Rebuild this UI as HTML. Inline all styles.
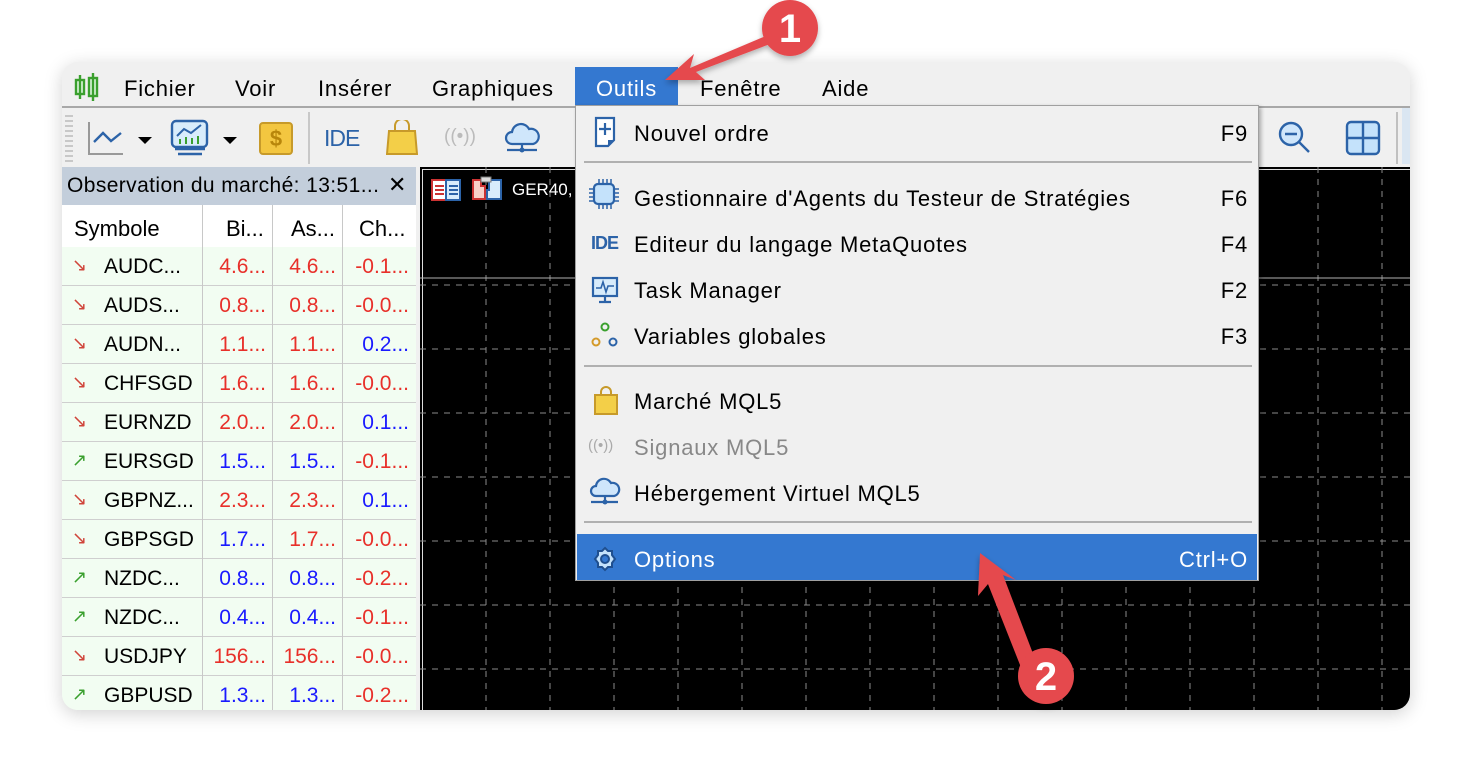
<!DOCTYPE html>
<html><head><meta charset="utf-8"><style>
*{margin:0;padding:0;box-sizing:border-box}
body{width:1472px;height:772px;background:#fff;position:relative;overflow:hidden;font-family:"Liberation Sans","DejaVu Sans",sans-serif;color:#000}
.a{position:absolute}
#win{position:absolute;left:62px;top:62px;width:1348px;height:648px;border-radius:16px;overflow:hidden;background:#f0f0f0;box-shadow:0 4px 18px rgba(0,0,0,.18)}
.mi{position:absolute;top:14px;font-size:22px;letter-spacing:.8px}
.row{position:absolute;left:0;width:354px;height:39px;background:#f2fdf2;border-bottom:1px solid #cfcfcf;font-size:21px}
.row div{position:absolute;top:8px}
.c1{left:42px}.c2{left:142px;width:62px;text-align:right}.c3{left:212px;width:62px;text-align:right}.c4{left:282px;width:65px;text-align:right}
.r{color:#e8302a}.b{color:#1a1aff}
.ar{left:10px;font-size:18px}
.vl{position:absolute;top:0;width:1px;height:100%;background:#c8c8c8}
.it{position:absolute;left:58px;font-size:22px;letter-spacing:.8px}
.sc{position:absolute;right:10px;font-size:22px;letter-spacing:.8px}
.sep{position:absolute;left:8px;right:6px;height:2px;background:#b0b0b0}
</style></head><body>
<div id="win">
 <svg class="a" style="left:12px;top:10px" width="26" height="30"><rect x="2" y="8" width="8" height="14" fill="#e0f8e0" stroke="#3aa02e" stroke-width="2.4"/><line x1="6" y1="3" x2="6" y2="27" stroke="#3aa02e" stroke-width="2.4"/><rect x="15" y="6" width="8" height="18" fill="#e0f8e0" stroke="#3aa02e" stroke-width="2.4"/><line x1="19" y1="1" x2="19" y2="29" stroke="#3aa02e" stroke-width="2.4"/></svg>
 <div class="mi" style="left:62px">Fichier</div>
 <div class="mi" style="left:173px">Voir</div>
 <div class="mi" style="left:256px">Insérer</div>
 <div class="mi" style="left:370px">Graphiques</div>
 <div class="a" style="left:513px;top:5px;width:103px;height:38px;background:#3478d0"></div>
 <div class="mi" style="left:534px;color:#fff">Outils</div>
 <div class="mi" style="left:638px">Fenêtre</div>
 <div class="mi" style="left:760px">Aide</div>
 <div class="a" style="left:0;top:44px;width:1348px;height:2px;background:#a8a8a8"></div>
 <div class="a" style="left:3px;top:50px;width:8px;height:52px;background:repeating-linear-gradient(#f0f0f0 0 3px,#c8c8c8 3px 5px)"></div>
 <svg class="a" style="left:25px;top:58px" width="40" height="36"><polyline points="2,2 2,34 36,34" fill="none" stroke="#999" stroke-width="2"/><polyline points="7,22 16,13 24,21 34,13" fill="none" stroke="#2c63a8" stroke-width="2.4"/></svg>
 <div class="a" style="left:76px;top:75px;width:0;height:0;border-left:7px solid transparent;border-right:7px solid transparent;border-top:7px solid #000"></div>
 <svg class="a" style="left:108px;top:57px" width="40" height="38"><rect x="2" y="2" width="35" height="26" rx="4" fill="#d8ecfb" stroke="#2c63a8" stroke-width="2.4"/><polyline points="7,17 14,10 21,14 31,6" fill="none" stroke="#2c63a8" stroke-width="2"/><g fill="#3aa02e"><rect x="9" y="20" width="2" height="5"/><rect x="15" y="18" width="2" height="7"/><rect x="21" y="19" width="2" height="6"/><rect x="27" y="17" width="2" height="8"/></g><path d="M5 30h30M8 35h24" stroke="#2c63a8" stroke-width="2.4"/></svg>
 <div class="a" style="left:161px;top:75px;width:0;height:0;border-left:7px solid transparent;border-right:7px solid transparent;border-top:7px solid #000"></div>
 <div class="a" style="left:197px;top:60px;width:34px;height:33px;background:#f3c640;border:2px solid #c79a2a;border-radius:4px;color:#b8860b;font-size:22px;font-weight:bold;text-align:center;line-height:29px">$</div>
 <div class="a" style="left:246px;top:50px;width:2px;height:52px;background:#c8c8c8"></div>
 <div class="a" style="left:262px;top:63px;font-size:23px;color:#2c63a8;letter-spacing:-1px">IDE</div>
 <svg class="a" style="left:324px;top:58px" width="32" height="36"><path d="M9 11V6a7 7 0 0 1 14 0v5" fill="none" stroke="#c79a2a" stroke-width="2"/><path d="M3 11h26l2 23H1z" fill="#f3cf48" stroke="#c79a2a" stroke-width="2"/></svg>
 <div class="a" style="left:382px;top:64px;font-size:19px;color:#bbb">((•))</div>
 <svg class="a" style="left:442px;top:58px" width="36" height="36"><path d="M8 24a6 6 0 0 1 0-12 9 9 0 0 1 17-3 7 7 0 0 1 4 15z" fill="#cfe6fb" stroke="#2c63a8" stroke-width="2.2"/><path d="M18 24v6M3 30h30" stroke="#2c63a8" stroke-width="2.2"/><circle cx="18" cy="30" r="2.5" fill="#2c63a8"/></svg>
 <svg class="a" style="left:1215px;top:58px" width="40" height="38"><circle cx="14" cy="14" r="11" fill="#cfe6fb" stroke="#2c63a8" stroke-width="2.4"/><path d="M8 14h12M22 22l10 10" stroke="#2c63a8" stroke-width="2.4"/></svg>
 <svg class="a" style="left:1283px;top:58px" width="36" height="36"><rect x="2" y="2" width="32" height="32" rx="4" fill="#c4e2fb" stroke="#2c63a8" stroke-width="2.4"/><path d="M18 2v32M2 18h32" stroke="#2c63a8" stroke-width="2.4"/></svg>
 <div class="a" style="left:1334px;top:50px;width:2px;height:52px;background:#c0c0c0"></div>
 <div class="a" style="left:1340px;top:46px;width:10px;height:56px;background:#dae6f2"></div>
 <div class="a" style="left:0;top:105px;width:354px;height:38px;background:#c3cedb;font-size:21px;letter-spacing:.4px;padding:7px 0 0 5px;white-space:nowrap">Observation du marché: 13:51...</div>
 <div class="a" style="left:326px;top:110px;width:28px;height:30px;background:#c3cedb;font-size:22px;font-weight:bold">✕</div>
 <div class="a" style="left:0;top:143px;width:354px;height:42px;background:#fff;font-size:22px">
  <div class="a" style="left:12px;top:11px">Symbole</div>
  <div class="a" style="left:164px;top:11px">Bi...</div>
  <div class="a" style="left:229px;top:11px">As...</div>
  <div class="a" style="left:297px;top:11px">Ch...</div>
 </div>
 <div class="a" style="left:0;top:185px;width:354px;height:463px;background:#f2fdf2">
  <div class="row" style="top:0"><div class="ar" style="color:#d0453b">↘</div><div class="c1">AUDC...</div><div class="c2 r">4.6...</div><div class="c3 r">4.6...</div><div class="c4 r">-0.1...</div></div>
  <div class="row" style="top:39px"><div class="ar" style="color:#d0453b">↘</div><div class="c1">AUDS...</div><div class="c2 r">0.8...</div><div class="c3 r">0.8...</div><div class="c4 r">-0.0...</div></div>
  <div class="row" style="top:78px"><div class="ar" style="color:#d0453b">↘</div><div class="c1">AUDN...</div><div class="c2 r">1.1...</div><div class="c3 r">1.1...</div><div class="c4 b">0.2...</div></div>
  <div class="row" style="top:117px"><div class="ar" style="color:#d0453b">↘</div><div class="c1">CHFSGD</div><div class="c2 r">1.6...</div><div class="c3 r">1.6...</div><div class="c4 r">-0.0...</div></div>
  <div class="row" style="top:156px"><div class="ar" style="color:#d0453b">↘</div><div class="c1">EURNZD</div><div class="c2 r">2.0...</div><div class="c3 r">2.0...</div><div class="c4 b">0.1...</div></div>
  <div class="row" style="top:195px"><div class="ar" style="color:#3aa02e">↗</div><div class="c1">EURSGD</div><div class="c2 b">1.5...</div><div class="c3 b">1.5...</div><div class="c4 r">-0.1...</div></div>
  <div class="row" style="top:234px"><div class="ar" style="color:#d0453b">↘</div><div class="c1">GBPNZ...</div><div class="c2 r">2.3...</div><div class="c3 r">2.3...</div><div class="c4 b">0.1...</div></div>
  <div class="row" style="top:273px"><div class="ar" style="color:#d0453b">↘</div><div class="c1">GBPSGD</div><div class="c2 b">1.7...</div><div class="c3 r">1.7...</div><div class="c4 r">-0.0...</div></div>
  <div class="row" style="top:312px"><div class="ar" style="color:#3aa02e">↗</div><div class="c1">NZDC...</div><div class="c2 b">0.8...</div><div class="c3 b">0.8...</div><div class="c4 r">-0.2...</div></div>
  <div class="row" style="top:351px"><div class="ar" style="color:#3aa02e">↗</div><div class="c1">NZDC...</div><div class="c2 b">0.4...</div><div class="c3 b">0.4...</div><div class="c4 r">-0.1...</div></div>
  <div class="row" style="top:390px"><div class="ar" style="color:#d0453b">↘</div><div class="c1">USDJPY</div><div class="c2 r">156...</div><div class="c3 r">156...</div><div class="c4 r">-0.0...</div></div>
  <div class="row" style="top:429px"><div class="ar" style="color:#3aa02e">↗</div><div class="c1">GBPUSD</div><div class="c2 b">1.3...</div><div class="c3 b">1.3...</div><div class="c4 r">-0.2...</div></div>
 </div>
 <div class="vl" style="left:140px;top:143px;height:505px"></div>
 <div class="vl" style="left:210px;top:143px;height:505px"></div>
 <div class="vl" style="left:280px;top:143px;height:505px"></div>
 <div class="a" style="left:357px;top:103px;width:991px;height:545px;background:#000;border-top:2px solid #f0f0f0;border-left:1px solid #f0f0f0">
  <div class="a" style="left:2px;top:2px;right:0;bottom:0;border:1px solid #ddd;border-right:none;border-bottom:none"></div>
  <svg class="a" style="left:0;top:0" width="991" height="545">
   <g stroke="#8a8a8a" stroke-width="1" stroke-dasharray="6,6">
    <path d="M66 0V545M130 0V545M194 0V545M258 0V545M322 0V545M386 0V545M450 0V545M514 0V545M578 0V545M642 0V545M706 0V545M770 0V545M834 0V545M898 0V545M962 0V545"/>
    <path d="M0 118H991M0 182H991M0 246H991M0 310H991M0 374H991M0 438H991M0 502H991"/>
   </g>
   <path d="M0 111H991" stroke="#b0b0b0"/>
  </svg>
  <svg class="a" style="left:11px;top:11px" width="32" height="24"><rect x="1" y="2" width="28" height="20" fill="#fff" stroke="#c33" stroke-width="2"/><rect x="15" y="2" width="14" height="20" fill="#d8ecfb" stroke="#2c63a8" stroke-width="2"/><path d="M4 8h9M4 12h9M4 16h9" stroke="#c33" stroke-width="2"/><path d="M18 8h9M18 12h9M18 16h9" stroke="#2c63a8" stroke-width="2"/></svg>
  <svg class="a" style="left:51px;top:9px" width="32" height="26"><path d="M2 4h8v6h4v13H2z" fill="#f8d0c8" stroke="#c33" stroke-width="2"/><path d="M18 4h12v19H16v-9h2z" fill="#d8ecfb" stroke="#2c63a8" stroke-width="2"/><rect x="10" y="1" width="10" height="5" fill="#ddd" stroke="#777"/></svg>
  <div class="a" style="left:92px;top:13px;color:#fff;font-size:17px">GER40,</div>
 </div>
 <div class="a" style="left:513px;top:43px;width:684px;height:476px;background:#f0f0f0;border:1px solid #a0a0a0;box-shadow:2px 2px 4px rgba(0,0,0,.3)">
  <svg class="a" style="left:18px;top:10px" width="24" height="32"><path d="M2 2h18v22l-6 6H2z" fill="#fff" stroke="#2c63a8" stroke-width="2.2"/><path d="M11 7v12M5 13h12" stroke="#2c63a8" stroke-width="2.2"/><path d="M14 30v-6h6" fill="#2c63a8"/></svg>
  <div class="it" style="top:15px">Nouvel ordre</div><div class="sc" style="top:15px">F9</div>
  <div class="sep" style="top:55px"></div>
  <svg class="a" style="left:13px;top:72px" width="30" height="32"><rect x="5" y="6" width="20" height="20" rx="4" fill="#c4e2fb" stroke="#2c63a8" stroke-width="2.2"/><path d="M10 1v5M14 1v5M18 1v5M22 1v5M10 26v5M14 26v5M18 26v5M22 26v5M0 11h5M0 15h5M0 19h5M0 23h5M25 11h5M25 15h5M25 19h5M25 23h5" stroke="#2c63a8" stroke-width="1.5"/></svg>
  <div class="it" style="top:80px">Gestionnaire d'Agents du Testeur de Stratégies</div><div class="sc" style="top:80px">F6</div>
  <div class="a" style="left:15px;top:127px;font-size:18px;font-weight:bold;color:#2c63a8;letter-spacing:-1px">IDE</div>
  <div class="it" style="top:126px">Editeur du langage MetaQuotes</div><div class="sc" style="top:126px">F4</div>
  <svg class="a" style="left:15px;top:170px" width="28" height="28"><rect x="2" y="2" width="24" height="18" fill="#d8ecfb" stroke="#2c63a8" stroke-width="2.2"/><polyline points="5,12 10,12 12,6 15,16 17,10 23,10" fill="none" stroke="#2c63a8" stroke-width="1.6"/><path d="M14 20v5M8 26h12" stroke="#2c63a8" stroke-width="2.2"/></svg>
  <div class="it" style="top:172px">Task Manager</div><div class="sc" style="top:172px">F2</div>
  <svg class="a" style="left:15px;top:214px" width="28" height="28"><circle cx="14" cy="7" r="3.5" fill="none" stroke="#3aa02e" stroke-width="2"/><circle cx="5" cy="22" r="3.5" fill="none" stroke="#d49a2a" stroke-width="2"/><circle cx="22" cy="22" r="3.5" fill="none" stroke="#2c63a8" stroke-width="2"/></svg>
  <div class="it" style="top:218px">Variables globales</div><div class="sc" style="top:218px">F3</div>
  <div class="sep" style="top:259px"></div>
  <svg class="a" style="left:17px;top:280px" width="26" height="30"><path d="M8 9V6a5 5 0 0 1 10 0v3" fill="none" stroke="#c79a2a" stroke-width="2"/><path d="M2 9h22v19H2z" fill="#f3cf48" stroke="#c79a2a" stroke-width="2"/></svg>
  <div class="it" style="top:283px">Marché MQL5</div>
  <div class="a" style="left:12px;top:331px;font-size:15px;color:#aaa">((•))</div>
  <div class="it" style="top:329px;color:#888">Signaux MQL5</div>
  <svg class="a" style="left:13px;top:370px" width="32" height="32"><path d="M7 20a5 5 0 0 1 0-10 8 8 0 0 1 15-3 6 6 0 0 1 3 13z" fill="#cfe6fb" stroke="#2c63a8" stroke-width="2.2"/><path d="M16 20v6M2 26h27" stroke="#2c63a8" stroke-width="2.2"/><circle cx="16" cy="26" r="2.5" fill="#2c63a8"/></svg>
  <div class="it" style="top:375px">Hébergement Virtuel MQL5</div>
  <div class="sep" style="top:415px"></div>
  <div class="a" style="left:1px;top:428px;width:680px;height:46px;background:#3478d0"></div>
  <svg class="a" style="left:16px;top:440px" width="26" height="26"><path d="M13 2l3 3h4v4l3 4-3 4v4h-4l-3 3-3-3H6v-4l-3-4 3-4V5h4z" fill="#c4e2fb" stroke="#1f4f8f" stroke-width="2"/><circle cx="13" cy="13" r="4" fill="#3478d0" stroke="#1f4f8f" stroke-width="2"/></svg>
  <div class="it" style="top:441px;color:#fff">Options</div><div class="sc" style="top:441px;color:#fff">Ctrl+O</div>
 </div>
</div>
<svg class="a" style="left:0;top:0" width="1472" height="772">
 <defs><filter id="sh" x="-50%" y="-50%" width="200%" height="200%"><feDropShadow dx="0" dy="3" stdDeviation="3" flood-opacity=".3"/></filter></defs>
 <g filter="url(#sh)" fill="#e5484d">
  <path d="M780 30 L690 68 L694 54 L665 80 L705 80 L696 72 L786 38z"/>
  <circle cx="790" cy="28" r="28"/>
  <path d="M1040 672 L1003 575 L1016 580 L980 553 L978 596 L988 584 L1026 680z"/>
  <circle cx="1046" cy="676" r="28"/>
 </g>
 <text x="790" y="42" fill="#fff" font-family="Liberation Sans" font-weight="bold" font-size="40" text-anchor="middle">1</text>
 <text x="1046" y="690" fill="#fff" font-family="Liberation Sans" font-weight="bold" font-size="40" text-anchor="middle">2</text>
</svg>
</body></html>
